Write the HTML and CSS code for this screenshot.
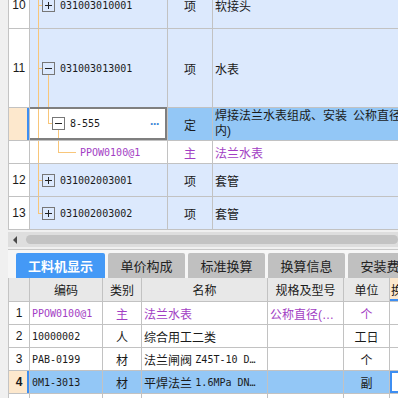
FILE: index.html
```html
<!DOCTYPE html>
<html lang="zh">
<head>
<meta charset="utf-8">
<link rel="stylesheet" href="styles.css">
</head>
<body>
<div class="frame">
  <div class="top">
    <div class="rows">
      <div class="row item r10">
        <div class="num">10</div>
        <div class="code t-mid"><span class="box plus"></span><span class="ctext">031003010001</span></div>
        <div class="unit">项</div>
        <div class="name">软接头</div>
      </div>
      <div class="row item r11">
        <div class="num">11</div>
        <div class="code t-open"><span class="box minus"></span><span class="ctext">031003013001</span></div>
        <div class="unit">项</div>
        <div class="name">水表</div>
      </div>
      <div class="row quota r-sel">
        <div class="num sel-num"></div>
        <div class="code t-quota"><span class="box minus lvl1"></span><span class="ctext">8-555</span><span class="more">···</span></div>
        <div class="unit">定</div>
        <div class="name two">焊接法兰水表组成、安装&ensp;公称直径(mm以<br>内)</div>
      </div>
      <div class="row res r-ppow">
        <div class="num"></div>
        <div class="code t-res"><span class="ctext purple">PPOW0100@1</span></div>
        <div class="unit purple">主</div>
        <div class="name purple">法兰水表</div>
      </div>
      <div class="row item r12">
        <div class="num">12</div>
        <div class="code t-mid"><span class="box plus"></span><span class="ctext">031002003001</span></div>
        <div class="unit">项</div>
        <div class="name">套管</div>
      </div>
      <div class="row item r13">
        <div class="num">13</div>
        <div class="code t-last"><span class="box plus"></span><span class="ctext">031002003002</span></div>
        <div class="unit">项</div>
        <div class="name">套管</div>
      </div>
    </div>
  </div>

  <div class="hscroll">
    <span class="arrow"></span>
    <span class="thumb"></span>
  </div>

  <div class="tabs">
    <div class="tab active">工料机显示</div>
    <div class="tab">单价构成</div>
    <div class="tab">标准换算</div>
    <div class="tab">换算信息</div>
    <div class="tab">安装费用</div>
  </div>

  <div class="grid">
    <div class="grow head">
      <div class="c n"></div>
      <div class="c k">编码</div>
      <div class="c t">类别</div>
      <div class="c m">名称</div>
      <div class="c s">规格及型号</div>
      <div class="c u">单位</div>
      <div class="c x hl">换算</div>
    </div>
    <div class="grow">
      <div class="c n">1</div>
      <div class="c k mono purple left">PPOW0100@1</div>
      <div class="c t purple">主</div>
      <div class="c m purple left">法兰水表</div>
      <div class="c s purple left">公称直径(…</div>
      <div class="c u purple">个</div>
      <div class="c x"></div>
    </div>
    <div class="grow">
      <div class="c n">2</div>
      <div class="c k mono left">10000002</div>
      <div class="c t">人</div>
      <div class="c m left">综合用工二类</div>
      <div class="c s"></div>
      <div class="c u">工日</div>
      <div class="c x"></div>
    </div>
    <div class="grow">
      <div class="c n">3</div>
      <div class="c k mono left">PAB-0199</div>
      <div class="c t">材</div>
      <div class="c m left">法兰闸阀&nbsp;<span class="mono">Z45T-10 D…</span></div>
      <div class="c s"></div>
      <div class="c u">个</div>
      <div class="c x"></div>
    </div>
    <div class="grow cur">
      <div class="c n sel-num"><b>4</b></div>
      <div class="c k mono left">0M1-3013</div>
      <div class="c t">材</div>
      <div class="c m left">平焊法兰&nbsp;<span class="mono">1.6MPa DN…</span></div>
      <div class="c s"></div>
      <div class="c u">副</div>
      <div class="c x focus"></div>
    </div>
    <div class="grow">
      <div class="c n"></div>
      <div class="c k"></div>
      <div class="c t"></div>
      <div class="c m"></div>
      <div class="c s"></div>
      <div class="c u"></div>
      <div class="c x"></div>
    </div>
  </div>
</div>
</body>
</html>
```

FILE: styles.css
```css
html, body {
  margin: 0;
  padding: 0;
  width: 398px;
  height: 398px;
  overflow: hidden;
  background: #f0f0f0;
  font-family: "Liberation Sans", "Noto Sans CJK SC", sans-serif;
  font-size: 12px;
  color: #1a1a1a;
}

.frame {
  margin-left: 8px;
  width: 390px;
  height: 398px;
  display: flex;
  flex-direction: column;
}

/* ---------- top tree table ---------- */
.top {
  height: 230px;
  overflow: hidden;
  background: #fff;
  border-left: 1px solid #c4c4c4;
  flex: none;
}
.rows {
  margin-top: -18px;
  width: 480px;
}
.row {
  display: flex;
  --bg: #dce9fd;
}
.row > div {
  box-sizing: border-box;
  border-right: 1px solid #c2c2c2;
  border-bottom: 1px solid #c2c2c2;
  display: flex;
  align-items: center;
}
.r10 { height: 47px; }
.r11 { height: 79px; }
.r-sel { height: 33px; }
.r-ppow { height: 23px; --bg: #fff; }
.r12, .r13 { height: 33px; }

.num {
  width: 21px;
  justify-content: center;
  background: #fff;
  font-size: 12px;
}
.sel-num {
  background: #fde8cd;
  box-shadow: inset -2px 0 #3d8ef2;
}
.code {
  width: 138px;
  background-color: var(--bg);
  background-repeat: no-repeat;
}
.unit {
  width: 45px;
  justify-content: center;
  background: var(--bg);
  font-size: 12px;
}
.name {
  width: 276px;
  padding-left: 2px;
  background: var(--bg);
  white-space: nowrap;
  font-size: 12px;
}
.name.two {
  line-height: 15px;
}
.quota .unit, .quota .name { background: #93c7f6; }
.quota .code {
  background-color: #fff;
  box-shadow: inset 0 2px #7f7f7f, inset -2px 0 #7f7f7f, inset 0 -2px #7f7f7f;
  margin-top: -1px;
  height: calc(100% + 1px);
}

.ctext,
.mono {
  font-family: "DejaVu Sans Mono", "Liberation Mono", monospace;
  font-size: 10px;
}
.purple { color: #a23ec4; }

/* tree connectors */
.t-mid {
  background-image:
    linear-gradient(#f8c67a, #f8c67a),
    linear-gradient(#f8c67a, #f8c67a);
  background-position: 8px 0, 8px 50%;
  background-size: 1px 100%, 5px 1px;
}
.t-last {
  background-image:
    linear-gradient(#f8c67a, #f8c67a),
    linear-gradient(#f8c67a, #f8c67a);
  background-position: 8px 0, 8px 50%;
  background-size: 1px 50%, 5px 1px;
}
.t-open {
  background-image:
    linear-gradient(#f8c67a, #f8c67a),
    linear-gradient(#f8c67a, #f8c67a),
    linear-gradient(#f8c67a, #f8c67a);
  background-position: 8px 0, 8px 50%, 18px 100%;
  background-size: 1px 100%, 5px 1px, 1px 50%;
}
.t-quota {
  background-image:
    linear-gradient(#f8c67a, #f8c67a),
    linear-gradient(#f8c67a, #f8c67a),
    linear-gradient(#f8c67a, #f8c67a),
    linear-gradient(#f8c67a, #f8c67a);
  background-position: 8px 0, 18px 0, 18px 50%, 28px 100%;
  background-size: 1px 100%, 1px 50%, 5px 1px, 1px 50%;
}
.t-res {
  background-image:
    linear-gradient(#f8c67a, #f8c67a),
    linear-gradient(#f8c67a, #f8c67a),
    linear-gradient(#f8c67a, #f8c67a);
  background-position: 8px 0, 28px 0, 28px 50%;
  background-size: 1px 100%, 1px 50%, 18px 1px;
}
.t-res .ctext { margin-left: 50px; }

.box {
  width: 13px;
  height: 13px;
  box-sizing: border-box;
  border: 1px solid #777;
  margin-left: 12px;
  margin-right: 5px;
  flex: none;
  background-repeat: no-repeat;
  background-color: var(--bg);
}
.box.lvl1 { margin-left: 22px; }
.quota .box { background-color: #fff; }
.box.plus {
  background-image: linear-gradient(#222, #222), linear-gradient(#222, #222);
  background-position: 50% 50%, 50% 50%;
  background-size: 7px 1px, 1px 7px;
}
.box.minus {
  background-image: linear-gradient(#222, #222);
  background-position: 50% 50%;
  background-size: 7px 1px;
}
.more {
  margin-left: auto;
  margin-right: 8px;
  color: #3b86d6;
  font-weight: bold;
  font-size: 12px;
  letter-spacing: -1px;
}

/* ---------- horizontal scrollbar ---------- */
.hscroll {
  height: 15px;
  margin-top: 2px;
  background: #dedede;
  display: flex;
  align-items: center;
  flex: none;
}
.arrow {
  width: 0;
  height: 0;
  border-top: 4px solid transparent;
  border-bottom: 4px solid transparent;
  border-right: 4px solid #4a4a4a;
  margin-left: 5px;
}
.thumb {
  height: 9px;
  flex: 1;
  margin-left: 9px;
  border-radius: 5px;
  background: #c3c3c3;
}

/* ---------- tabs ---------- */
.tabs {
  margin-top: 2px;
  border-top: 1px solid #c8c8c8;
  padding: 3px 0 0 8px;
  display: flex;
  gap: 3px;
  background: #f6f6f6;
  flex: none;
  overflow: hidden;
}
.tab {
  flex: none;
  width: 77px;
  height: 25px;
  border-radius: 2px 2px 0 0;
  background: #c0c0c0;
  color: #222;
  font-size: 13px;
  display: flex;
  align-items: center;
  justify-content: center;
}
.tab.active {
  width: 89px;
  background: #4499f6;
  color: #fff;
  font-weight: bold;
}

/* ---------- bottom grid ---------- */
.grid {
  flex: none;
  background: #fff;
  border-left: 1px solid #c4c4c4;
  overflow: hidden;
}
.grow {
  display: flex;
  height: 23px;
}
.grow.head { height: 24px; }
.grow .c {
  box-sizing: border-box;
  border-right: 1px solid #c2c2c2;
  border-bottom: 1px solid #c2c2c2;
  display: flex;
  align-items: center;
  justify-content: center;
  white-space: nowrap;
  overflow: hidden;
  font-size: 12px;
  flex: none;
}
.grow.head .c { background: #e8e8e8; font-size: 12px; }
.grow .c.left { justify-content: flex-start; padding-left: 2px; }
.grow .c.mono { font-size: 10px; }
.grow .n { width: 21px; }
.grow .k { width: 73px; }
.grow .t { width: 39px; }
.grow .m { width: 126px; }
.grow .s { width: 76px; }
.grow .u { width: 46px; }
.grow .x { width: 40px; justify-content: flex-start; padding-left: 1px; }
.grow.head .c.hl {
  background: #fde8cd;
  box-shadow: inset 0 -2px #3d8ef2;
}
.grow.cur .c { background: #93c7f6; }
.grow.cur .c.n { background: #fde8cd; box-shadow: inset -2px 0 #3d8ef2; }
.grow.cur .c.focus {
  background: #fff;
  box-shadow: inset 2px 2px #3d8ef2, inset 0 -2px #3d8ef2;
}
```
